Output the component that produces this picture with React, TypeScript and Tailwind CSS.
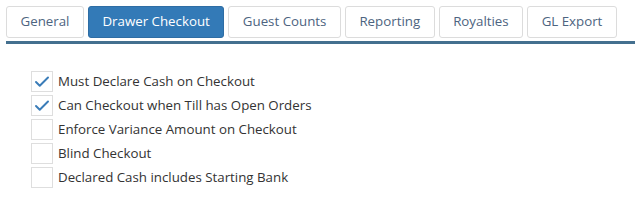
import { Check } from "lucide-react";

const TABS = ["General", "Drawer Checkout", "Guest Counts", "Reporting", "Royalties", "GL Export"];
const ACTIVE = "Drawer Checkout";

const OPTIONS: { label: string; checked: boolean }[] = [
  { label: "Must Declare Cash on Checkout", checked: true },
  { label: "Can Checkout when Till has Open Orders", checked: true },
  { label: "Enforce Variance Amount on Checkout", checked: false },
  { label: "Blind Checkout", checked: false },
  { label: "Declared Cash includes Starting Bank", checked: false },
];

export default function App() {
  return (
    <div
      className="h-[205px] w-[635px] bg-white text-[13.3px]"
      style={{ fontFamily: '"Open Sans", "Noto Sans", sans-serif' }}
    >
      <div className="pl-[6px] pt-[6px]">
        <div className="flex gap-[4px] border-b-[3px] border-[#44708f] pb-[3px]">
          {TABS.map((tab) =>
            tab === ACTIVE ? (
              <div
                key={tab}
                className="flex h-[32px] shrink-0 items-center whitespace-nowrap rounded-[3px] border border-[#2e6da4] bg-[#337ab7] px-[13.5px] text-white"
              >
                {tab}
              </div>
            ) : (
              <div
                key={tab}
                className="flex h-[32px] shrink-0 items-center whitespace-nowrap rounded-[3px] border border-[#dcdcdc] bg-white px-[13.5px] text-[#4d6480]"
              >
                {tab}
              </div>
            )
          )}
        </div>
      </div>

      <ul className="mt-[27px] flex flex-col gap-[3px] pl-[31px]">
        {OPTIONS.map((opt) => (
          <li key={opt.label} className="flex h-[21px] items-center gap-[5px] text-[#333]">
            <span className="flex h-[21px] w-[22px] items-center justify-center border border-[#dedede] bg-white">
              {opt.checked && <Check size={18} strokeWidth={2.6} className="text-[#3a7cb8]" />}
            </span>
            <span>{opt.label}</span>
          </li>
        ))}
      </ul>
    </div>
  );
}
